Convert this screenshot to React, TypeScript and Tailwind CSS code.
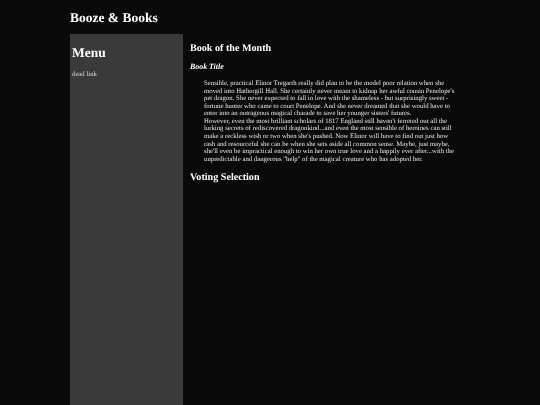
export default function App() {
  return (
    <div className="h-[405px] overflow-hidden bg-[#0a0a0a] text-[#e4e4e4] font-['Liberation_Serif',serif] [text-rendering:geometricPrecision] will-change-transform">
      <div className="mx-[70px] w-[400px]">
        <header className="h-[34px] pt-[10px]">
          <h1 className="text-[13.5px] leading-[16px] font-bold text-white">Booze &amp; Books</h1>
        </header>
        <div className="flex">
          <aside className="w-[112.5px] h-[371px] shrink-0 bg-[#3a3a3a] px-[2px] pt-[11px]">
            <h2 className="text-[13.5px] leading-[16px] font-bold text-white">Menu</h2>
            <p className="mt-[10px] text-[6.75px] leading-[8px] text-[#d8d8d8]">dead link</p>
          </aside>
          <main className="flex-1 pl-[7.5px] pt-[8.5px]">
            <h3 className="text-[10.12px] leading-[12px] font-bold text-white">Book of the Month</h3>
            <h4 className="mt-[7.5px] text-[7.9px] leading-[9px] font-bold italic text-white">Book Title</h4>
            <div className="mt-[9px] ml-[14px] w-[255px] text-[6.75px] leading-[7.56px]">
              <p>
                Sensible, practical Elinor Tregarth really did plan to be the model poor relation when she moved into Hathergill Hall. She certainly never meant to kidnap her awful cousin Penelope's pet dragon. She never expected to fall in love with the shameless - but surprisingly sweet - fortune hunter who came to court Penelope. And she never dreamed that she would have to enter into an outrageous magical charade to save her younger sisters' futures.
              </p>
              <p>
                However, even the most brilliant scholars of 1817 England still haven't ferreted out all the lurking secrets of rediscovered dragonkind...and even the most sensible of heroines can still make a reckless wish or two when she's pushed. Now Elinor will have to find out just how rash and resourceful she can be when she sets aside all common sense. Maybe, just maybe, she'll even be impractical enough to win her own true love and a happily ever after...with the unpredictable and dangerous "help" of the magical creature who has adopted her.
              </p>
            </div>
            <h3 className="mt-[9px] text-[10.12px] leading-[12px] font-bold text-white">Voting Selection</h3>
          </main>
        </div>
      </div>
    </div>
  );
}
